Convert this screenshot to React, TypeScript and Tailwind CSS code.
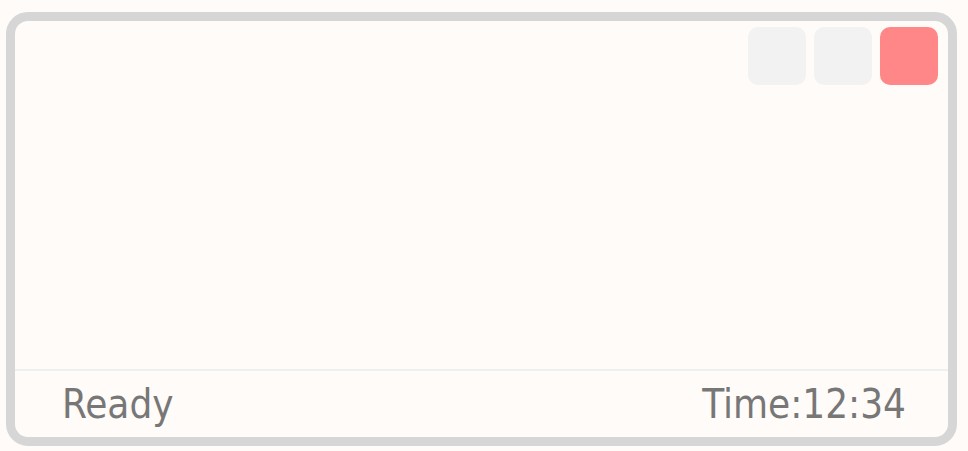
export default function App() {
  return (
    <div className="w-[968px] h-[451px] bg-[#fffbf8] pt-[12px] pl-[6px]">
      <div className="w-[951px] h-[434px] border-[9px] border-[#d6d6d6] rounded-[22px] bg-[#fffbf8] flex flex-col overflow-hidden">
        <div className="flex-1 flex justify-end items-start gap-2 pt-[6px] pr-[10px]">
          <button className="w-[58px] h-[58px] rounded-[10px] bg-[#f2f2f2]" />
          <button className="w-[58px] h-[58px] rounded-[10px] bg-[#f2f2f2]" />
          <button className="w-[58px] h-[58px] rounded-[10px] bg-[#ff8787]" />
        </div>
        <div className="h-[68px] border-t-2 border-[#efefef] flex items-center justify-between pl-[47px] pr-[42px] text-[#777777] text-[40px] leading-none font-['DejaVu_Sans_Condensed',sans-serif]">
          <span>Ready</span>
          <span>Time:12:34</span>
        </div>
      </div>
    </div>
  );
}
